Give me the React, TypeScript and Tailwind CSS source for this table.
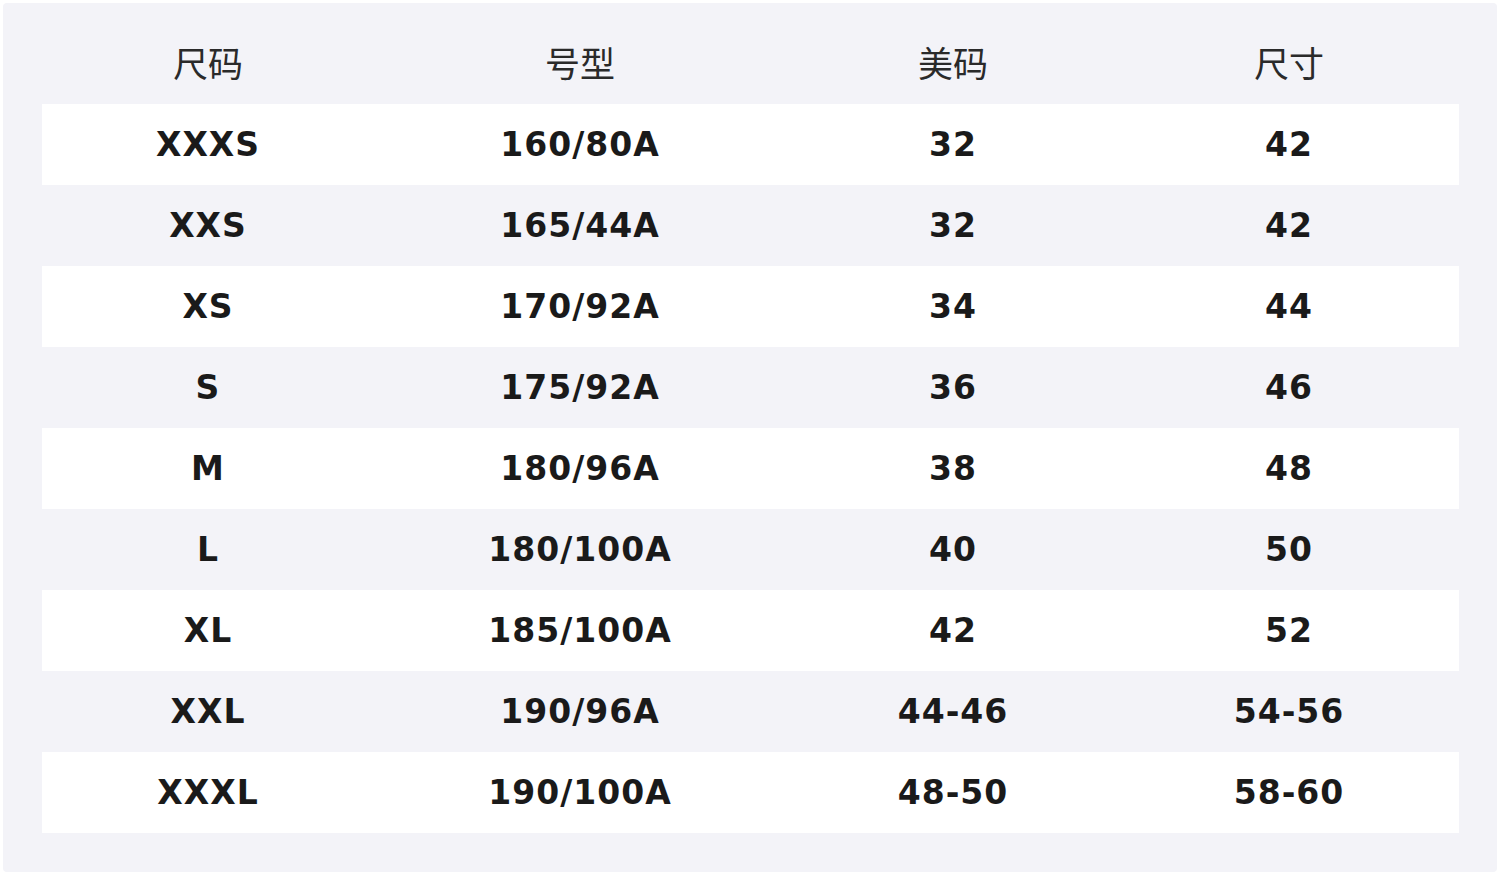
import React from "react";

const rows = [
  ["XXXS", "160/80A", "32", "42"],
  ["XXS", "165/44A", "32", "42"],
  ["XS", "170/92A", "34", "44"],
  ["S", "175/92A", "36", "46"],
  ["M", "180/96A", "38", "48"],
  ["L", "180/100A", "40", "50"],
  ["XL", "185/100A", "42", "52"],
  ["XXL", "190/96A", "44-46", "54-56"],
  ["XXXL", "190/100A", "48-50", "58-60"],
];

const widths = ["w-[332px]", "w-[412px]", "w-[334px]", "w-[338px]"];
const headers = ["尺码", "号型", "美码", "尺寸"];

export default function App() {
  return (
    <div className="w-[1500px] h-[875px] bg-white p-[3px]">
      <div className="w-full h-full bg-[#f3f3f8] rounded-[4px] pt-[18px] pl-[39px] pr-[38px]">
        <div className="flex h-[83px]">
          {headers.map((h, i) => (
            <div
              key={h}
              className={`${widths[i]} flex items-center justify-center text-[35px] text-[#2a2a2a] [font-family:'Noto_Sans_CJK_SC',sans-serif]`}
            >
              {h}
            </div>
          ))}
        </div>
        {rows.map((r, ri) => (
          <div
            key={ri}
            className={`flex h-[81px] ${ri % 2 === 0 ? "bg-white" : "bg-[#f3f3f8]"}`}
          >
            {r.map((c, ci) => (
              <div
                key={ci}
                className={`${widths[ci]} flex items-center justify-center text-[33px] tracking-[1px] font-bold text-[#1a1a1a] [font-family:'DejaVu_Sans',sans-serif]`}
              >
                {c}
              </div>
            ))}
          </div>
        ))}
      </div>
    </div>
  );
}
